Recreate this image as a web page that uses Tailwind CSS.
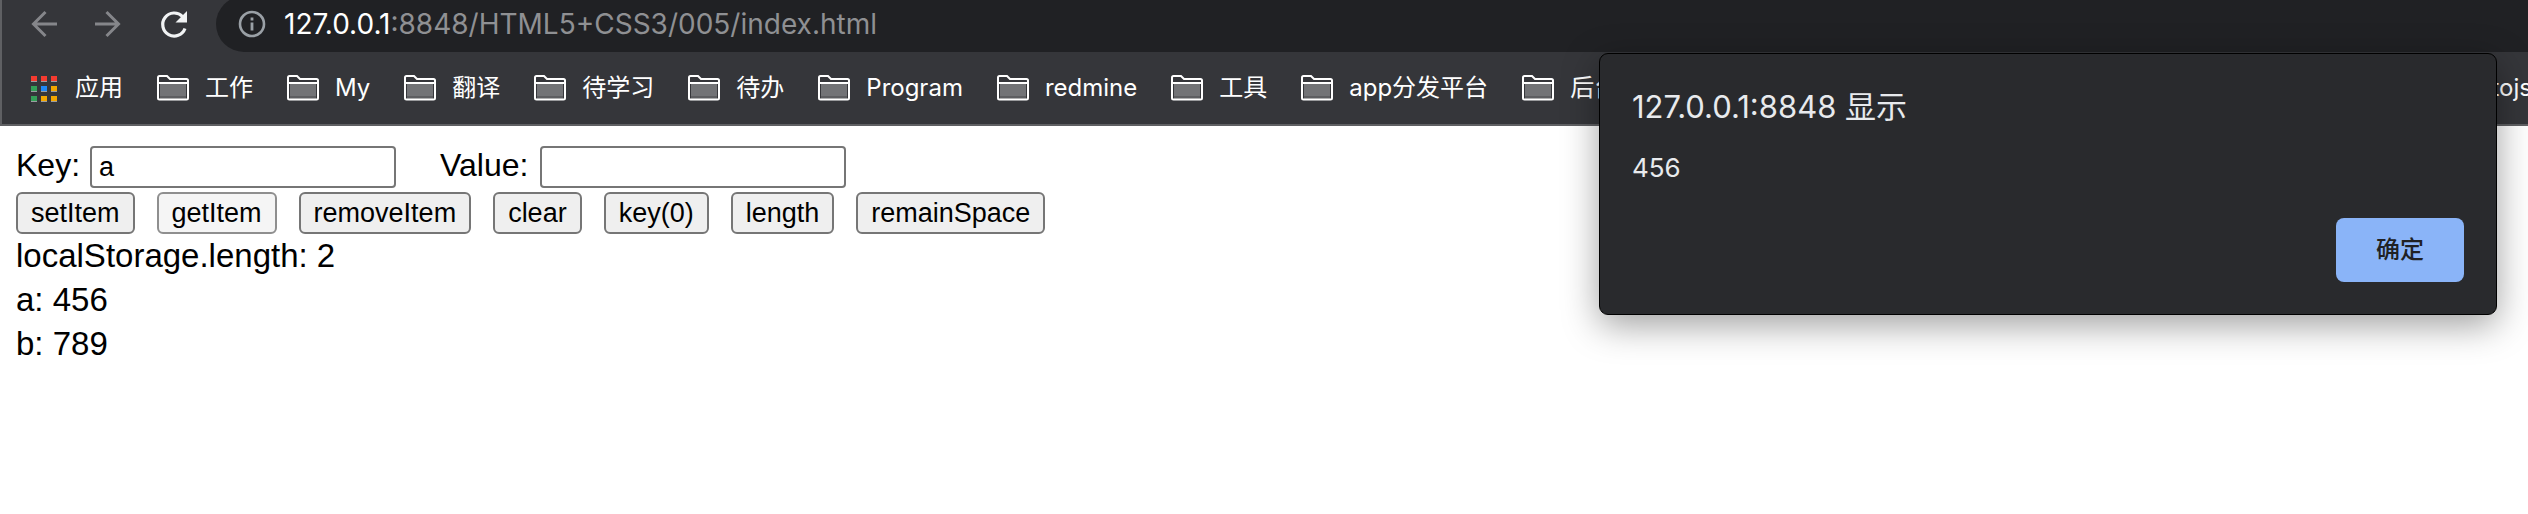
<!DOCTYPE html>
<html lang="zh-CN">
<head>
<meta charset="utf-8">
<title>localStorage</title>
<script src="https://cdn.jsdelivr.net/npm/@tailwindcss/browser@4"></script>
</head>
<body class="relative min-h-screen overflow-x-hidden bg-white font-['Liberation_Sans','Noto_Sans_CJK_SC',sans-serif] text-black">
<svg class="hidden" aria-hidden="true">
  <symbol id="folder" viewBox="0 0 32 26">
    <path d="M3 8h26v16H3z" fill="#727376"/>
    <path d="M3 21h26v3H3z" fill="#5d5e61"/>
    <path d="M1 23V2.500Q1 1 2.500 1H10L13 4H29.500Q31 4 31 5.500V23Q31 24.500 29.500 24.500H2.500Q1 24.500 1 23ZM1 8H31" fill="none" stroke="#fff" stroke-width="2"/>
  </symbol>
</svg>

<header class="overflow-hidden border-b-2 border-l-2 border-[#5f6063] bg-[#35363a] font-['Inter','Noto_Sans_CJK_SC',sans-serif]">
  <div class="-mt-1 flex h-14 items-center pl-7">
    <button aria-label="Back" class="h-8 w-8"><svg viewBox="0 0 32 32" class="h-8 w-8" fill="none" stroke="#85868a" stroke-width="3"><path d="M27 16H3.500M15.500 4L3.500 16l12 12"/></svg></button>
    <button aria-label="Forward" class="ml-8 h-8 w-8"><svg viewBox="0 0 32 32" class="h-8 w-8" fill="none" stroke="#85868a" stroke-width="3"><path d="M1 16h23.500M12.500 4l12 12-12 12"/></svg></button>
    <button aria-label="Reload" class="ml-8 h-8 w-8"><svg viewBox="0 0 32 32" class="h-8 w-8" fill="none"><path d="M27 20.500A11.500 11.500 0 1 1 24.500 8.500" stroke="#f1f3f4" stroke-width="3.200"/><path d="M29 3V14.500H17.500Z" fill="#f1f3f4"/></svg></button>
    <div class="ml-[26px] flex h-14 flex-1 items-center rounded-l-[28px] bg-[#202124] pl-[22px]">
      <svg viewBox="0 0 28 28" class="h-7 w-7 shrink-0" fill="none"><circle cx="14" cy="14" r="12" stroke="#9aa0a6" stroke-width="2.600"/><path d="M14 12.500V20.500M14 7.500V10.500" stroke="#9aa0a6" stroke-width="2.800"/></svg>
      <p class="ml-[18px] text-[28px] leading-8 text-[#8f9093]"><span class="text-white">127.0.0.1</span>:8848/HTML5+CSS3/005/index.html</p>
    </div>
  </div>
  <nav class="flex h-[72px] items-center gap-[34px] pl-[29px] text-[24px] leading-8 whitespace-nowrap text-white">
    <a href="#" class="flex items-center gap-[18px]">
      <svg viewBox="0 0 26 27" class="h-[27px] w-[26px]"><path d="M0 1h6v6H0zM10 1h6v6h-6zM20 1h6v6h-6z" fill="#f53b30"/><path d="M0 11h6v6H0zM0 21h6v6H0z" fill="#34a058"/><path d="M10 11h6v6h-6z" fill="#1f87f5"/><path d="M20 11h6v6h-6zM10 21h6v6h-6zM20 21h6v6h-6z" fill="#f2a600"/><path d="M0 6h6v1H0zM10 6h6v1h-6zM20 6h6v1h-6zM0 16h6v1H0zM10 16h6v1h-6zM20 16h6v1h-6zM0 26h6v1H0zM10 26h6v1h-6zM20 26h6v1h-6z" fill="#9b9da1"/></svg>应用</a>
    <a href="#" class="flex items-center gap-4"><svg class="h-[26px] w-8"><use href="#folder"/></svg>工作</a>
    <a href="#" class="flex items-center gap-4"><svg class="h-[26px] w-8"><use href="#folder"/></svg>My</a>
    <a href="#" class="flex items-center gap-4"><svg class="h-[26px] w-8"><use href="#folder"/></svg>翻译</a>
    <a href="#" class="flex items-center gap-4"><svg class="h-[26px] w-8"><use href="#folder"/></svg>待学习</a>
    <a href="#" class="flex items-center gap-4"><svg class="h-[26px] w-8"><use href="#folder"/></svg>待办</a>
    <a href="#" class="flex items-center gap-4"><svg class="h-[26px] w-8"><use href="#folder"/></svg>Program</a>
    <a href="#" class="flex items-center gap-4"><svg class="h-[26px] w-8"><use href="#folder"/></svg>redmine</a>
    <a href="#" class="flex items-center gap-4"><svg class="h-[26px] w-8"><use href="#folder"/></svg>工具</a>
    <a href="#" class="flex items-center gap-4"><svg class="h-[26px] w-8"><use href="#folder"/></svg>app分发平台</a>
    <a href="#" class="flex items-center gap-4"><svg class="h-[26px] w-8"><use href="#folder"/></svg>后台</a>
    <a href="#" class="-mr-1 ml-auto">tojs</a>
  </nav>
</header>

<main class="px-4 pt-5 text-[32px] leading-[44px]">
  <div class="flex h-[42px] items-center">
    <label for="key" class="mr-[10px] -mt-1">Key:</label>
    <input id="key" type="text" value="a" class="h-[42px] w-[306px] rounded-[4px] border-2 border-[#767676] bg-white px-[7px] text-[27px]">
    <label for="value" class="mr-3 -mt-1 ml-11">Value:</label>
    <input id="value" type="text" class="h-[42px] w-[306px] rounded-[4px] border-2 border-[#767676] bg-white px-[7px] text-[27px]">
  </div>
  <div class="mt-1 flex gap-[22px] text-[27px] leading-[38px]">
    <button class="rounded-[6px] border-2 border-[#767676] bg-[#efefef] px-[13px]">setItem</button>
    <button class="rounded-[6px] border-2 border-[#8f8f8f] bg-[#f5f5f5] px-[13px]">getItem</button>
    <button class="rounded-[6px] border-2 border-[#767676] bg-[#efefef] px-[13px]">removeItem</button>
    <button class="rounded-[6px] border-2 border-[#767676] bg-[#efefef] px-[13px]">clear</button>
    <button class="rounded-[6px] border-2 border-[#767676] bg-[#efefef] px-[13px]">key(0)</button>
    <button class="rounded-[6px] border-2 border-[#767676] bg-[#efefef] px-[13px]">length</button>
    <button class="rounded-[6px] border-2 border-[#767676] bg-[#efefef] px-[13px]">remainSpace</button>
  </div>
  <div class="text-[33px] leading-[44px]">
    <p>localStorage.length: 2</p>
    <p>a: 456</p>
    <p>b: 789</p>
  </div>
</main>

<section role="alertdialog" aria-labelledby="dlg-title" aria-describedby="dlg-text" class="absolute top-[53px] right-[31px] flex w-[898px] flex-col rounded-[9px] border border-black bg-[#292a2d] px-8 pt-8 pb-8 font-['Inter','Noto_Sans_CJK_SC',sans-serif] text-[#e8eaed] shadow-[0_10px_36px_rgba(0,0,0,0.38)]">
  <h1 id="dlg-title" class="text-[31px] leading-[42px]">127.0.0.1:8848 显示</h1>
  <p id="dlg-text" class="mt-6 text-[26px] leading-8">456</p>
  <button class="mt-[34px] h-16 w-32 self-end rounded-lg bg-[#8ab4f8] text-[24px] font-medium text-[#202124]">确定</button>
</section>
</body>
</html>
